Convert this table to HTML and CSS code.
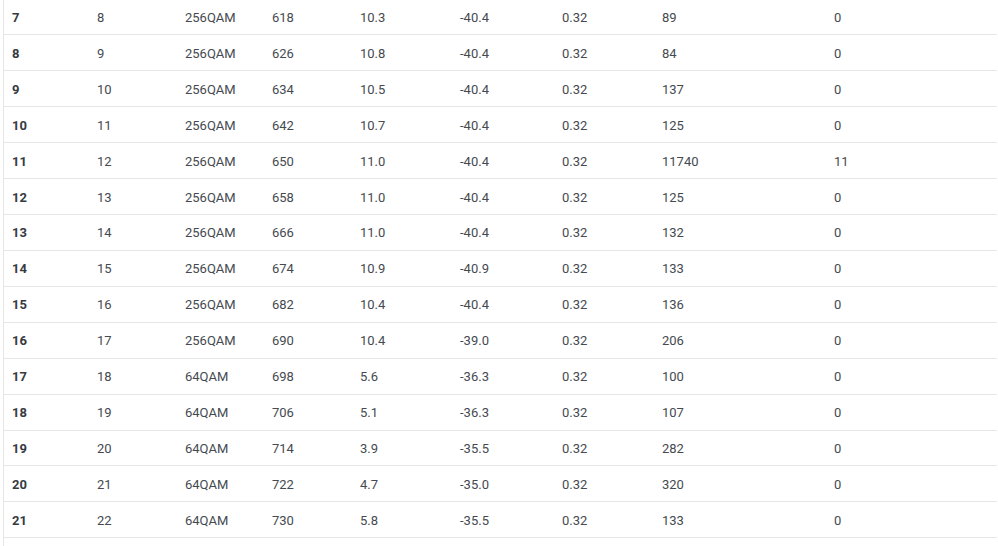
FILE: index.html
```html
<!DOCTYPE html>
<html>
<head>
<meta charset="utf-8">
<link rel="stylesheet" href="styles.css">
</head>
<body>
<div class="wrap">
<table class="grid">
<colgroup>
<col class="c1"><col class="c2"><col class="c3"><col class="c4"><col class="c5"><col class="c6"><col class="c7"><col class="c8"><col class="c9">
</colgroup>
<tbody>
<tr><th>7</th><td>8</td><td>256QAM</td><td>618</td><td>10.3</td><td>-40.4</td><td>0.32</td><td>89</td><td>0</td></tr>
<tr><th>8</th><td>9</td><td>256QAM</td><td>626</td><td>10.8</td><td>-40.4</td><td>0.32</td><td>84</td><td>0</td></tr>
<tr><th>9</th><td>10</td><td>256QAM</td><td>634</td><td>10.5</td><td>-40.4</td><td>0.32</td><td>137</td><td>0</td></tr>
<tr><th>10</th><td>11</td><td>256QAM</td><td>642</td><td>10.7</td><td>-40.4</td><td>0.32</td><td>125</td><td>0</td></tr>
<tr><th>11</th><td>12</td><td>256QAM</td><td>650</td><td>11.0</td><td>-40.4</td><td>0.32</td><td>11740</td><td>11</td></tr>
<tr><th>12</th><td>13</td><td>256QAM</td><td>658</td><td>11.0</td><td>-40.4</td><td>0.32</td><td>125</td><td>0</td></tr>
<tr><th>13</th><td>14</td><td>256QAM</td><td>666</td><td>11.0</td><td>-40.4</td><td>0.32</td><td>132</td><td>0</td></tr>
<tr><th>14</th><td>15</td><td>256QAM</td><td>674</td><td>10.9</td><td>-40.9</td><td>0.32</td><td>133</td><td>0</td></tr>
<tr><th>15</th><td>16</td><td>256QAM</td><td>682</td><td>10.4</td><td>-40.4</td><td>0.32</td><td>136</td><td>0</td></tr>
<tr><th>16</th><td>17</td><td>256QAM</td><td>690</td><td>10.4</td><td>-39.0</td><td>0.32</td><td>206</td><td>0</td></tr>
<tr><th>17</th><td>18</td><td>64QAM</td><td>698</td><td>5.6</td><td>-36.3</td><td>0.32</td><td>100</td><td>0</td></tr>
<tr><th>18</th><td>19</td><td>64QAM</td><td>706</td><td>5.1</td><td>-36.3</td><td>0.32</td><td>107</td><td>0</td></tr>
<tr><th>19</th><td>20</td><td>64QAM</td><td>714</td><td>3.9</td><td>-35.5</td><td>0.32</td><td>282</td><td>0</td></tr>
<tr><th>20</th><td>21</td><td>64QAM</td><td>722</td><td>4.7</td><td>-35.0</td><td>0.32</td><td>320</td><td>0</td></tr>
<tr><th>21</th><td>22</td><td>64QAM</td><td>730</td><td>5.8</td><td>-35.5</td><td>0.32</td><td>133</td><td>0</td></tr>
</tbody>
</table>
</div>
</body>
</html>
```
FILE: styles.css
```css
html, body {
  margin: 0;
  padding: 0;
  background: #fff;
  overflow: hidden;
  height: 546px;
}
body {
  padding-left: 3px;
}
.wrap {
  border-left: 1px solid #e6e6e6;
  margin-top: -1px;
  height: 560px;
  width: 994px;
}
.grid {
  border-collapse: collapse;
  table-layout: fixed;
  width: 993px;
  font-family: "Roboto", "Liberation Sans", sans-serif;
  font-size: 13px;
  color: #454a50;
}
.c1 { width: 85px; }
.c2 { width: 88px; }
.c3 { width: 87px; }
.c4 { width: 88px; }
.c5 { width: 100px; }
.c6 { width: 102px; }
.c7 { width: 100px; }
.c8 { width: 172px; }
.c9 { width: 171px; }
.grid tr {
  height: 35.93px;
}
.grid th, .grid td {
  padding: 1px 0 0 8px;
  text-align: left;
  vertical-align: middle;
  border-bottom: 1px solid #e6e6e6;
  white-space: nowrap;
}
.grid th {
  font-weight: 700;
  color: #363a3f;
}
```
